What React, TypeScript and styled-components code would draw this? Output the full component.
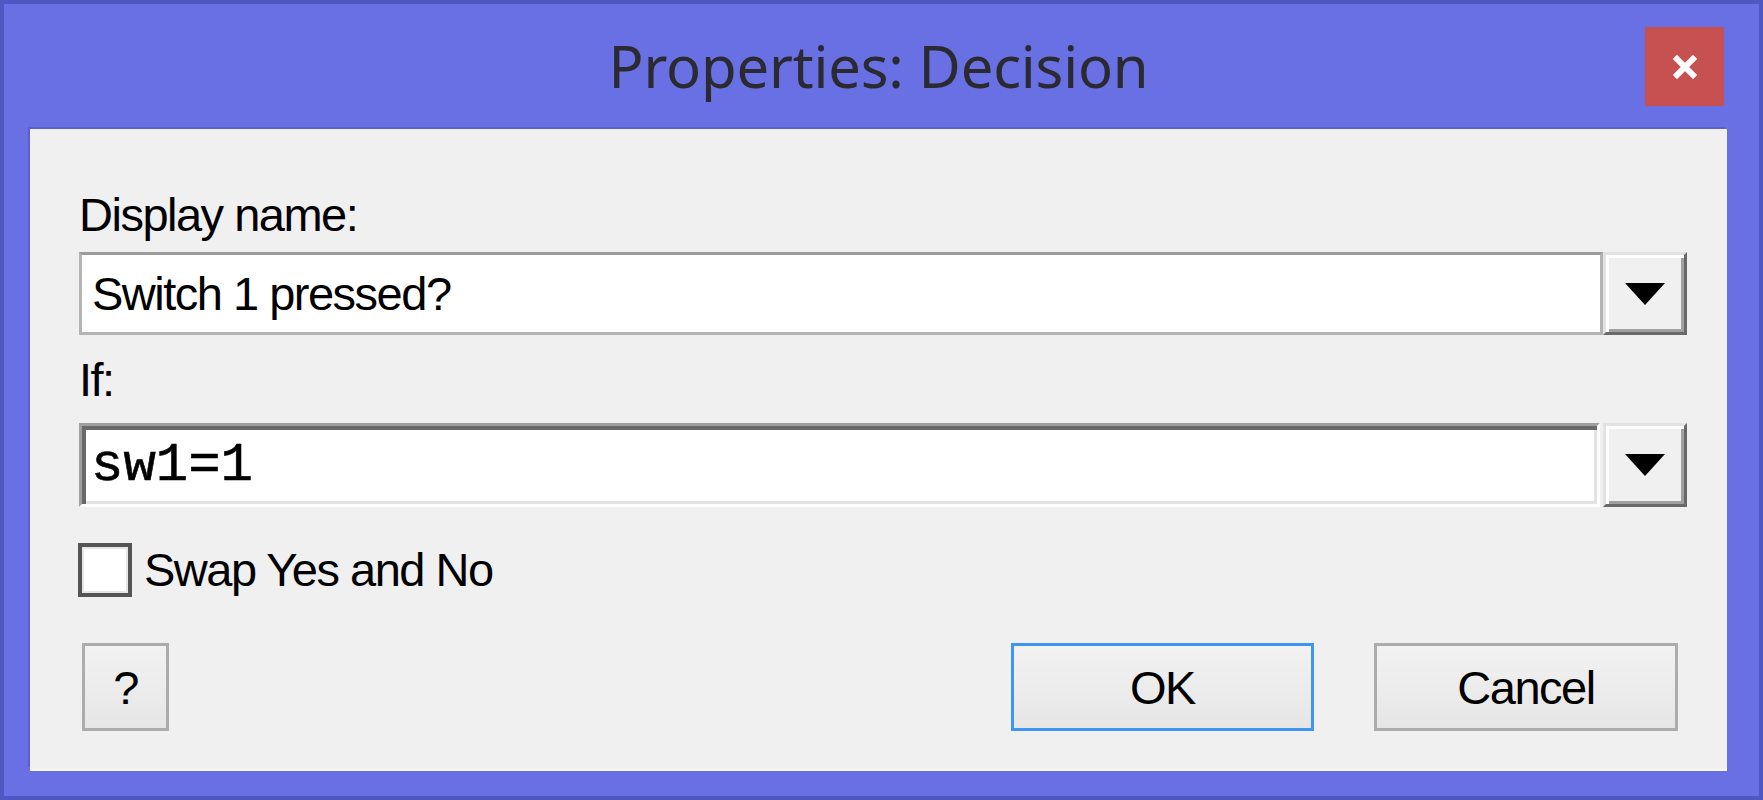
import React from 'react';
import styled, { createGlobalStyle } from 'styled-components';

const GlobalStyle = createGlobalStyle`
  html, body {
    margin: 0;
    padding: 0;
    background: #6870e4;
  }
  * {
    box-sizing: border-box;
  }
`;

const Window = styled.div`
  width: 1763px;
  height: 800px;
  display: flex;
  flex-direction: column;
  background: #6870e4;
  border: 4px solid #4f58c2;
  padding: 0 32px 27px 26px;
`;

const TitleBar = styled.div`
  height: 125px;
  display: grid;
  grid-template-columns: 1fr auto 1fr;
  align-items: start;
`;

const Title = styled.div`
  grid-column: 2;
  margin-top: 22px;
  font-family: 'Noto Sans', 'Open Sans', sans-serif;
  font-size: 58px;
  line-height: 80px;
  letter-spacing: -0.2px;
  color: #2a2a30;
  white-space: nowrap;
`;

const CloseButton = styled.div`
  grid-column: 3;
  justify-self: end;
  margin-top: 23px;
  margin-right: 3px;
  width: 79px;
  height: 79px;
  background: #c75050;
  display: flex;
  align-items: center;
  justify-content: center;
`;

const Panel = styled.div`
  flex: 1;
  display: flex;
  flex-direction: column;
  background: #f0f0f0;
  padding: 59px 40px 0 49px;
  box-shadow: -2px -2px 0 #5961d2, 0 2px 0 #f8f8f8;
  font-family: 'Liberation Sans', Arial, sans-serif;
  font-size: 47px;
  letter-spacing: -1.5px;
  color: #000;
`;

const Label = styled.div<{ $gap: number }>`
  margin-top: ${p => p.$gap}px;
  line-height: 54px;
  white-space: nowrap;
`;

const Combo = styled.div<{ $gap: number; $height: number }>`
  margin-top: ${p => p.$gap}px;
  height: ${p => p.$height}px;
  display: flex;
  gap: ${p => (p.$height > 83 ? 3 : 0)}px;
`;

const FlatInput = styled.div`
  flex: 1;
  display: flex;
  align-items: center;
  background: #fff;
  border: 3px solid #b4b4b4;
  border-top-color: #9c9c9c;
  padding-left: 10px;
  white-space: nowrap;
`;

const SunkenInput = styled.div`
  flex: 1;
  display: flex;
  align-items: center;
  background: #fff;
  border-top: 3px solid #a0a0a0;
  border-left: 3px solid #a0a0a0;
  border-right: 3px solid #ffffff;
  border-bottom: 3px solid #ffffff;
  box-shadow: inset 4px 4px 0 #696969, inset -3px -3px 0 #e3e3e3;
  padding-left: 9px;
  font-family: 'Liberation Mono', 'Courier New', monospace;
  font-weight: 400;
  font-size: 54px;
  letter-spacing: 0;
  -webkit-text-stroke: 0.6px #000;
  white-space: nowrap;
`;

const DropButton = styled.div`
  width: 84px;
  display: flex;
  align-items: center;
  justify-content: center;
  background: #f0f0f0;
  border-top: 3px solid #e3e3e3;
  border-left: 3px solid #e3e3e3;
  border-right: 3px solid #696969;
  border-bottom: 3px solid #696969;
  box-shadow: inset 3px 3px 0 #ffffff, inset -3px -3px 0 #a0a0a0;
`;

const CheckRow = styled.div`
  margin-top: 36px;
  height: 54px;
  display: flex;
  align-items: center;
  gap: 12px;
  margin-left: -1px;
`;

const CheckBox = styled.div`
  width: 54px;
  height: 54px;
  background: #fff;
  border: 4px solid #555;
  box-shadow: inset 0 0 0 2px #e6e6e6;
`;

const CheckLabel = styled.span`
  line-height: 54px;
  white-space: nowrap;
`;

const ButtonRow = styled.div`
  margin-top: 46px;
  height: 88px;
  display: flex;
  align-items: stretch;
  gap: 60px;
  margin-left: 3px;
  margin-right: 9px;
`;

const Button = styled.div<{ $width: number; $default?: boolean }>`
  width: ${p => p.$width}px;
  display: flex;
  align-items: center;
  justify-content: center;
  background: linear-gradient(#f2f2f2, #e6e6e6);
  border: 3px solid ${p => (p.$default ? '#3c97f0' : '#acacac')};
  white-space: nowrap;
`;

const Spacer = styled.div`
  flex: 1;
`;

const Arrow = () => (
  <svg width="40" height="22" viewBox="0 0 40 22">
    <polygon points="0,0 40,0 20,22" fill="#000" />
  </svg>
);

const CloseIcon = () => (
  <svg width="24" height="24" viewBox="0 0 24 24">
    <path d="M4 4 L20 20 M20 4 L4 20" stroke="#fff" strokeWidth="6" strokeLinecap="square" />
  </svg>
);

const App: React.FC = () => {
  return (
    <>
      <GlobalStyle />
      <Window>
        <TitleBar>
          <Title>Properties: Decision</Title>
          <CloseButton>
            <CloseIcon />
          </CloseButton>
        </TitleBar>
        <Panel>
          <Label $gap={0}>Display name:</Label>
          <Combo $gap={10} $height={83}>
            <FlatInput>Switch 1 pressed?</FlatInput>
            <DropButton>
              <Arrow />
            </DropButton>
          </Combo>
          <Label $gap={18}>If:</Label>
          <Combo $gap={16} $height={84}>
            <SunkenInput>sw1=1</SunkenInput>
            <DropButton>
              <Arrow />
            </DropButton>
          </Combo>
          <CheckRow>
            <CheckBox />
            <CheckLabel>Swap Yes and No</CheckLabel>
          </CheckRow>
          <ButtonRow>
            <Button $width={87}>?</Button>
            <Spacer />
            <Button $width={303} $default>OK</Button>
            <Button $width={304}>Cancel</Button>
          </ButtonRow>
        </Panel>
      </Window>
    </>
  );
};

export default App;
